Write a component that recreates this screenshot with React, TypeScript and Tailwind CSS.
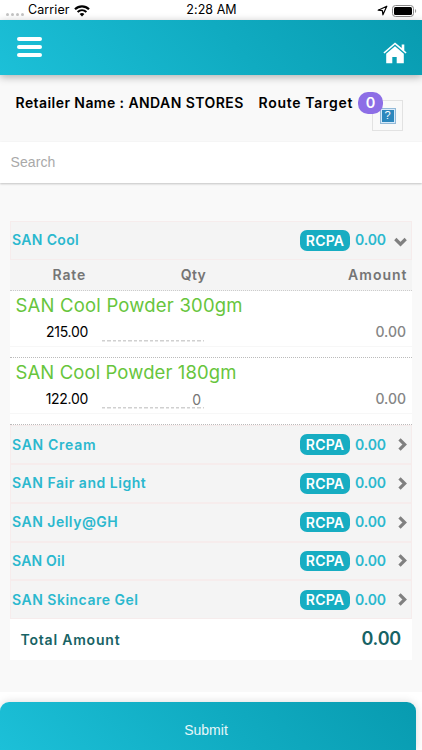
import { useState } from 'react';
import { clsx } from 'clsx';

const products = [
  { name: 'SAN Cool Powder 300gm', rate: '215.00', qty: '', amount: '0.00', tracking: 'tracking-[0.2px]' },
  { name: 'SAN Cool Powder 180gm', rate: '122.00', qty: '0', amount: '0.00', tracking: 'tracking-[0.1px]' },
];

const groups = [
  { name: 'SAN Cool', total: '0.00', items: products, tracking: 'tracking-[0.35px]' },
  { name: 'SAN Cream', total: '0.00', items: [], tracking: 'tracking-[0.7px]' },
  { name: 'SAN Fair and Light', total: '0.00', items: [], tracking: 'tracking-[0.53px]' },
  { name: 'SAN Jelly@GH', total: '0.00', items: [], tracking: 'tracking-[0.5px]' },
  { name: 'SAN Oil', total: '0.00', items: [], tracking: 'tracking-[0.2px]' },
  { name: 'SAN Skincare Gel', total: '0.00', items: [], tracking: 'tracking-[0.5px]' },
];

const StatusBar = () => (
  <div className="flex h-[20px] shrink-0 items-center justify-between bg-white pl-[6px] pr-[5px] pt-px text-[12.5px] text-black">
    <div className="flex w-[140px] items-center">
      <div className="flex gap-[2px] pt-[7px]">
        {[0, 1, 2, 3].map((i) => (
          <span key={i} className="h-[3px] w-[3px] rounded-full bg-[#c4c4c4]" />
        ))}
      </div>
      <span className="ml-[4px] tracking-[0.1px]">Carrier</span>
      <svg className="ml-[4px] h-[12px] w-[16px]" viewBox="0 0 16 12" fill="none" stroke="black">
        <path d="M1 4.3C5 .4 11 .4 15 4.3" strokeWidth="2.2" />
        <path d="M3.6 7C6.2 4.6 9.8 4.6 12.4 7" strokeWidth="2" />
        <path d="M8 11.5 5.6 9C7 7.8 9 7.8 10.4 9Z" fill="black" stroke="none" />
      </svg>
    </div>
    <span className="tracking-[0.05px]">2:28 AM</span>
    <div className="flex w-[140px] items-center justify-end">
      <svg className="h-[11px] w-[11px]" viewBox="0 0 11 11" fill="none" stroke="black" strokeWidth="1.2">
        <path d="M9.8 1.2 1.2 5.2 5.4 5.6 5.9 9.8Z" strokeLinejoin="round" />
      </svg>
      <svg className="ml-[4px] h-[12px] w-[25px]" viewBox="0 0 25 12">
        <rect x=".5" y=".5" width="21" height="11" rx="3" fill="none" stroke="#888" />
        <rect x="2" y="2" width="18" height="8" rx="1.5" />
        <path d="M23 4v4c1.6-.5 1.6-3.5 0-4" fill="#999" />
      </svg>
    </div>
  </div>
);

const Chevron = ({ open }: { open: boolean }) =>
  open ? (
    <svg className="h-[10px] w-[13px] shrink-0" viewBox="0 0 13 10" fill="none" stroke="#808080" strokeWidth="3.2">
      <path d="M1.3 2 6.5 7.2 11.7 2" />
    </svg>
  ) : (
    <svg className="h-[13px] w-[9px] shrink-0" viewBox="0 0 9 13" fill="none" stroke="#808080" strokeWidth="3.2">
      <path d="M1.5 1.3 6.7 6.5 1.5 11.7" />
    </svg>
  );

export default function App() {
  const [open, setOpen] = useState('SAN Cool');

  return (
    <div className="flex h-[750px] w-[422px] flex-col overflow-hidden bg-[#f9f9f9] font-['Inter',sans-serif]">
      <StatusBar />

      {/* Header */}
      <header className="flex h-[55px] shrink-0 items-start justify-between bg-[linear-gradient(45deg,#1cc0d8_0%,#10abc1_55%,#089bb0_100%)] pl-[16.5px] pr-[15px] shadow-[0_2px_8px_rgba(0,0,0,0.3)]">
        <button className="mt-[17px] flex flex-col gap-[4px]">
          <span className="h-[4px] w-[25px] rounded-full bg-white" />
          <span className="h-[4px] w-[25px] rounded-full bg-white" />
          <span className="h-[4px] w-[25px] rounded-full bg-white" />
        </button>
        <svg className="mt-[22px] h-[22px] w-[24px]" viewBox="0 0 24 22" fill="white">
          <path d="M12 0.4 0.4 10.4 1.5 11.4 12 2.4 22.5 11.4 23.6 10.4 21.3 8.4V2.4H18.7V6.1Z" />
          <path d="M12 4.2 3.2 11.7V21.2H9.3V15H13.7V21.2H20.8V11.7Z" />
        </svg>
      </header>

      {/* Retailer */}
      <div className="flex h-[67px] shrink-0 items-start pl-[15.5px] text-[14px] font-semibold text-black">
        <span className="w-[243px] whitespace-nowrap pt-[17px] tracking-[0.43px]">Retailer Name : ANDAN STORES</span>
        <span className="w-[99.5px] whitespace-nowrap pt-[17px] tracking-[0.7px]">Route Target</span>
        <span className="relative z-10 mt-[17px] flex h-[22px] w-[25px] items-center justify-center rounded-[10px] bg-[#8d6ee6] text-[14.5px] text-white">0</span>
        <span className="-ml-[11px] mt-[25px] flex h-[31px] w-[31px] items-center justify-center border border-[#e2e2e2]">
          <span className="flex h-[16px] w-[16px] items-center justify-center border border-[#92b9d7] bg-[#d7eafa] p-px">
            <span className="flex h-full w-full items-center justify-center bg-[#2c87bd] font-['Liberation_Sans',sans-serif] text-[11px] font-normal text-white">?</span>
          </span>
        </span>
      </div>

      <input
        placeholder="Search"
        className="h-[41px] w-full shrink-0 bg-white pb-[2px] pl-[10.5px] font-['Liberation_Sans',sans-serif] text-[14px] tracking-[0.1px] shadow-[0_1px_2px_rgba(0,0,0,0.22)] outline-none placeholder:text-[#a9a9a9]"
      />

      {/* Groups */}
      <main className="mx-[10px] mt-[38px] h-[439px] shrink-0 bg-white">
        {groups.map((group) => (
          <section key={group.name}>
            <button
              onClick={() => setOpen(open === group.name ? '' : group.name)}
              className="flex h-[38.8px] w-full items-center border border-[#f6ecec] bg-[#f4f4f4] pl-px pr-[4px] text-[14px] font-semibold text-[#2bb8ce]"
            >
              <span className={clsx('flex-1 whitespace-nowrap pb-px text-left', group.tracking)}>{group.name}</span>
              <span className="flex h-[20.5px] w-[50px] items-center justify-center rounded-[7px] bg-[#17adc2] tracking-[0.2px] text-white">RCPA</span>
              <span className="ml-[5px] w-[39px] pb-px text-left tracking-[-0.1px]">{group.total}</span>
              <span className={clsx('flex w-[13px] justify-end', open === group.name && 'pt-[4px]')}>
                <Chevron open={open === group.name} />
              </span>
            </button>
            {open === group.name && group.items.length > 0 && (
              <div>
                <div className="flex h-[31px] items-center border-b border-dotted border-[#ccc] bg-[#f4f4f4] text-[14px] font-semibold text-[#757575]">
                  <span className="w-[76px] text-right tracking-[0.8px]">Rate</span>
                  <span className="w-[120px] text-right tracking-[0.3px]">Qty</span>
                  <span className="flex-1 pr-[4.5px] text-right tracking-[1px]">Amount</span>
                </div>
                {group.items.map((item) => (
                  <div key={item.name} className="h-[67.2px] border-b border-dotted border-[#bbb]">
                    <div className="h-[56px] border-b border-[#f7f7f7]">
                      <div className={clsx('h-[29px] pl-[5.5px] text-[18.5px] leading-[29px] text-[#67c53c]', item.tracking)}>{item.name}</div>
                      <div className="flex items-start pt-px text-[14px] leading-[21px]">
                        <span className="w-[78px] text-right tracking-[-0.3px] text-black">{item.rate}</span>
                        <span className="ml-[14px] h-[21px] w-[102px] bg-[repeating-linear-gradient(90deg,#d0d0d0_0px,#d0d0d0_3.3px,transparent_3.3px,transparent_5.3px)] bg-[length:100%_1.5px] bg-bottom bg-no-repeat pr-[3px] text-right leading-[24px] text-[#757575]">{item.qty}</span>
                        <span className="flex-1 pr-[6px] text-right font-medium text-[#858585]">{item.amount}</span>
                      </div>
                    </div>
                  </div>
                ))}
              </div>
            )}
          </section>
        ))}
        <div className="flex h-[40px] items-center justify-between pl-[10.5px] pr-[11px] font-semibold text-[#176365]">
          <span className="text-[14px] tracking-[0.8px]">Total Amount</span>
          <span className="pb-[2px] text-[18px] tracking-[-0.2px]">0.00</span>
        </div>
      </main>

      <div className="mt-auto flex h-[58px] shrink-0 items-end bg-white">
        <button className="h-[48px] w-[416px] rounded-t-[9px] bg-[linear-gradient(45deg,#1cc0d8_0%,#10abc1_55%,#089bb0_100%)] pr-[4px] pt-[9px] font-['Liberation_Sans',sans-serif] text-[14px] text-white/90 shadow-[0_0_8px_rgba(0,0,0,0.15)]">
          Submit
        </button>
      </div>
    </div>
  );
}
